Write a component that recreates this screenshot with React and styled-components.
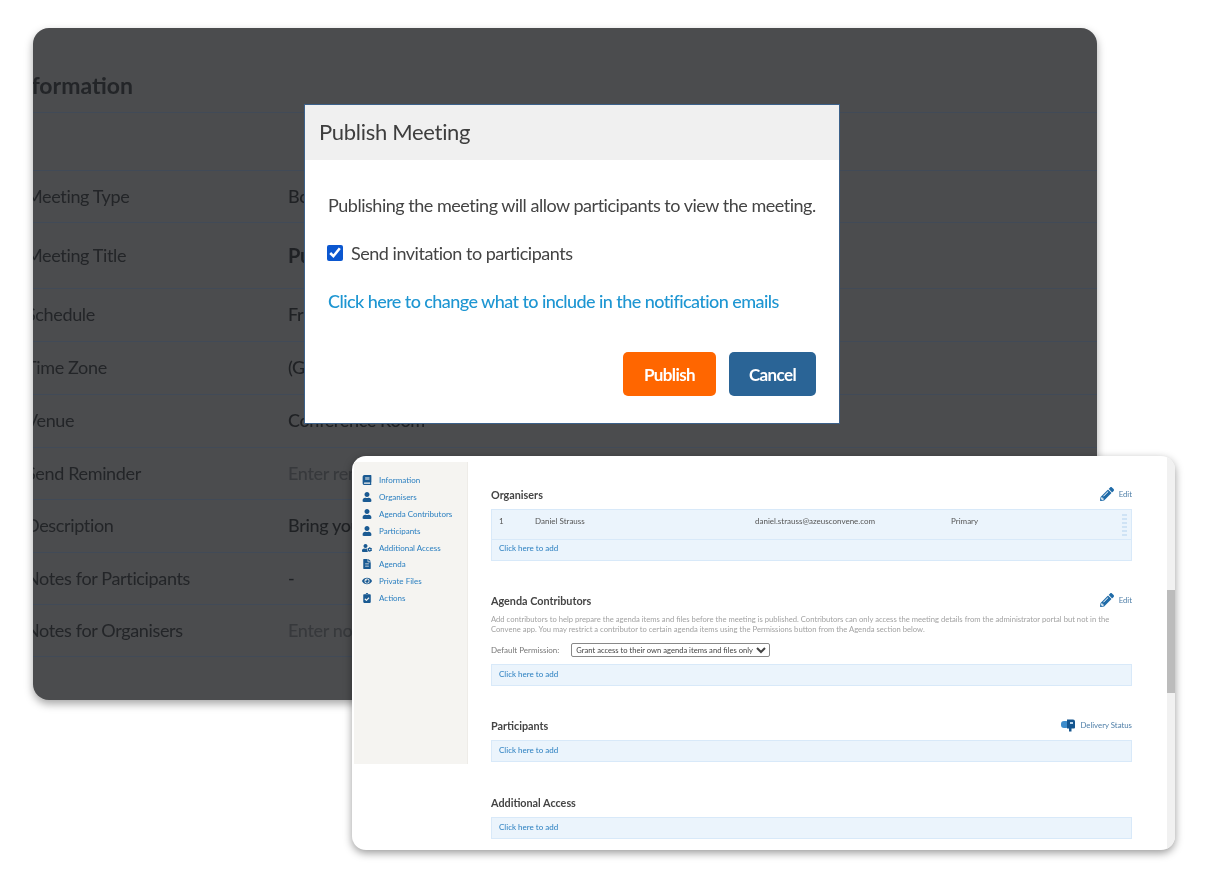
import styled, { createGlobalStyle } from "styled-components";
import {
  FaBook,
  FaUser,
  FaUserCog,
  FaFileAlt,
  FaEye,
  FaClipboardCheck,
  FaPencilAlt,
} from "react-icons/fa";

const GlobalStyle = createGlobalStyle`
  body {
    margin: 0;
    background: #fff;
    font-family: Lato, "Noto Sans", sans-serif;
  }
`;

const Stage = styled.div`
  position: relative;
  width: 1210px;
  height: 870px;
  overflow: hidden;
`;

/* dark page behind the modal */
const BackCard = styled.div`
  position: absolute;
  left: 33px;
  top: 28px;
  width: 1064px;
  height: 672px;
  display: flex;
  flex-direction: column;
  background: #4b4c4e;
  border-radius: 16px;
  box-shadow: 0 4px 8px rgba(0, 0, 0, 0.35);
  overflow: hidden;
  filter: blur(0.5px);
`;

const BackTitle = styled.h2`
  margin: 0 0 0 -21px;
  height: 84px;
  padding-top: 44px;
  box-sizing: border-box;
  font-size: 23px;
  line-height: 27px;
  font-weight: 700;
  color: #232528;
`;

const BackRow = styled.div`
  display: grid;
  grid-template-columns: 262px 1fr;
  align-items: center;
  margin-left: -7px;
  height: ${(p) => p.$h}px;
  padding-bottom: 2px;
  box-sizing: border-box;
  border-top: 1px solid #414a57;
  font-size: 18px;
  letter-spacing: -0.35px;
  color: #232528;
  &:last-child {
    border-bottom: 1px solid #414a57;
  }
`;

const BackValue = styled.span`
  color: ${(p) => (p.$muted ? "#37393c" : "#1f2124")};
  font-weight: ${(p) => (p.$bold ? 700 : 500)};
  font-size: ${(p) => (p.$big ? 20 : 18)}px;
  white-space: nowrap;
`;

/* modal */
const Modal = styled.div`
  position: absolute;
  left: 304px;
  top: 104px;
  width: 536px;
  height: 320px;
  box-sizing: border-box;
  display: flex;
  flex-direction: column;
  background: #fff;
  border: 1px solid #3c618a;
  filter: blur(0.4px);
`;

const ModalHeader = styled.div`
  height: 55px;
  padding: 13px 14px 0;
  box-sizing: border-box;
  background: #f0f0f0;
  font-size: 22px;
  line-height: 28px;
  letter-spacing: -0.3px;
  color: #3e3e3e;
`;

const ModalBody = styled.div`
  display: flex;
  flex-direction: column;
  padding: 33px 23px 0;
  font-size: 18px;
  letter-spacing: -0.48px;
  color: #444;
`;

const ModalText = styled.p`
  margin: 0;
  line-height: 24px;
  white-space: nowrap;
`;

const CheckLine = styled.label`
  display: flex;
  align-items: center;
  gap: 8px;
  margin-top: 24px;
  line-height: 24px;
`;

const Check = styled.input`
  width: 16px;
  height: 16px;
  margin: 0 0 0 -1px;
  accent-color: #0b57d0;
`;

const ModalLink = styled.a`
  margin-top: 24px;
  line-height: 24px;
  font-weight: 500;
  letter-spacing: -0.57px;
  white-space: nowrap;
  color: #1e96d2;
`;

const ModalFooter = styled.div`
  display: flex;
  justify-content: flex-end;
  gap: 13px;
  margin-top: 39px;
`;

const Button = styled.button`
  width: ${(p) => p.$w}px;
  height: 44px;
  border: 0;
  border-radius: 5px;
  background: ${(p) => p.$bg};
  color: #fff;
  font-family: inherit;
  font-size: 17px;
  font-weight: 700;
  letter-spacing: -0.6px;
`;

/* front window */
const Win = styled.div`
  position: absolute;
  left: 352px;
  top: 456px;
  width: 823px;
  height: 394px;
  display: flex;
  background: #fff;
  border-radius: 14px;
  box-shadow: 0 3px 8px rgba(0, 0, 0, 0.4);
  overflow: hidden;
  filter: blur(0.5px);
`;

const Sidebar = styled.nav`
  flex: none;
  align-self: flex-start;
  width: 114px;
  height: 302px;
  margin: 6px 0 0 2px;
  padding-top: 10px;
  box-sizing: border-box;
  background: #f5f4f1;
  border-right: 1px solid #eeece8;
`;

const NavItem = styled.div`
  display: flex;
  align-items: center;
  height: 16.8px;
  padding-left: 8px;
  font-size: 8px;
  color: #2a7fc0;
  svg {
    flex: none;
    width: 10px;
    height: 10px;
    margin-right: 7px;
    color: #1a5a92;
  }
`;

const Main = styled.main`
  flex: 1;
  padding: 0 35px 0 23px;
`;

const SectionHead = styled.div`
  display: flex;
  justify-content: space-between;
  align-items: center;
  height: 16px;
  margin-top: ${(p) => p.$top}px;
`;

const Heading = styled.h3`
  margin: 0;
  font-size: 10.8px;
  font-weight: 700;
  color: #444;
`;

const HeadAction = styled.span`
  display: flex;
  align-items: center;
  gap: 5px;
  font-size: 7.8px;
  color: #4f7fa8;
  svg {
    width: 14px;
    height: 14px;
    color: #1f6ba8;
  }
`;

const Box = styled.div`
  margin-top: ${(p) => p.$top || 0}px;
  background: #ebf4fc;
  border: 1px solid #d8e9f9;
`;

const PersonRow = styled.div`
  position: relative;
  display: grid;
  grid-template-columns: 36px 220px 196px 1fr;
  height: 30px;
  padding: 7px 0 0 7px;
  box-sizing: border-box;
  border-bottom: 1px solid #d8e9f9;
  font-size: 8px;
  line-height: 9px;
  color: #555;
`;

const DragHandle = styled.span`
  position: absolute;
  right: 4px;
  top: 4px;
  width: 5px;
  height: 22px;
  background: repeating-linear-gradient(#cfe3f5 0 2px, transparent 2px 4px);
`;

const AddLink = styled.div`
  height: 20px;
  padding-left: 7px;
  font-size: 8px;
  line-height: ${(p) => (p.$raised ? 16 : 18)}px;
  color: #2a7fc0;
`;

const HelpText = styled.p`
  margin: 6px 0 0;
  width: 622px;
  font-size: 7.65px;
  line-height: 10px;
  color: #a2a2a2;
`;

const PermissionLine = styled.div`
  display: flex;
  align-items: center;
  gap: 12px;
  margin-top: 9px;
  font-size: 8px;
  color: #777;
`;

const PermissionSelect = styled.select`
  width: 199px;
  height: 14px;
  padding: 0;
  border: 1px solid #888;
  border-radius: 2px;
  background: #fff;
  font-family: inherit;
  font-size: 7.6px;
  color: #444;
`;

const Scrollbar = styled.div`
  flex: none;
  width: 8px;
  padding-top: 134px;
  box-sizing: border-box;
  background: #f1f1f1;
`;

const ScrollThumb = styled.div`
  height: 103px;
  background: #bcbcbc;
`;

const MailboxIcon = () => (
  <svg viewBox="0 0 14 14">
    <rect x="0" y="3" width="8" height="7" rx="3" fill="#3d8ccb" />
    <path d="M6 1.5 h6 a2 2 0 0 1 2 2 v6 a1 1 0 0 1 -1 1 h-2.5 v3 h-2.5 v-3 h-2 z" fill="#15568f" />
    <rect x="9" y="4" width="3" height="2" fill="#bcd8ef" />
  </svg>
);

const backRows = [
  { h: 58, label: "" },
  { h: 52, label: "Meeting Type", value: "Board Meeting" },
  { h: 66, label: "Meeting Title", value: "Publish Meeting", bold: true, big: true },
  { h: 53, label: "Schedule", value: "Friday, 10 March" },
  { h: 53, label: "Time Zone", value: "(GMT+08:00) Singapore" },
  { h: 53, label: "Venue", value: "Conference Room" },
  { h: 52, label: "Send Reminder", value: "Enter reminder", muted: true },
  { h: 53, label: "Description", value: "Bring your laptop" },
  { h: 52, label: "Notes for Participants", value: "-" },
  { h: 53, label: "Notes for Organisers", value: "Enter notes", muted: true },
];

const navItems = [
  { icon: FaBook, label: "Information" },
  { icon: FaUser, label: "Organisers" },
  { icon: FaUser, label: "Agenda Contributors" },
  { icon: FaUser, label: "Participants" },
  { icon: FaUserCog, label: "Additional Access" },
  { icon: FaFileAlt, label: "Agenda" },
  { icon: FaEye, label: "Private Files" },
  { icon: FaClipboardCheck, label: "Actions" },
];

const App = () => {
  return (
    <Stage>
      <GlobalStyle />
      <BackCard>
        <BackTitle>Information</BackTitle>
        {backRows.map((row) => (
          <BackRow key={row.label} $h={row.h}>
            <span>{row.label}</span>
            <BackValue $muted={row.muted} $bold={row.bold} $big={row.big}>
              {row.value}
            </BackValue>
          </BackRow>
        ))}
      </BackCard>

      <Modal>
        <ModalHeader>Publish Meeting</ModalHeader>
        <ModalBody>
          <ModalText>Publishing the meeting will allow participants to view the meeting.</ModalText>
          <CheckLine>
            <Check type="checkbox" defaultChecked />
            Send invitation to participants
          </CheckLine>
          <ModalLink>Click here to change what to include in the notification emails</ModalLink>
          <ModalFooter>
            <Button $w={93} $bg="#ff6600">Publish</Button>
            <Button $w={87} $bg="#2a6496">Cancel</Button>
          </ModalFooter>
        </ModalBody>
      </Modal>

      <Win>
        <Sidebar>
          {navItems.map(({ icon: Icon, label }) => (
            <NavItem key={label}>
              <Icon />
              {label}
            </NavItem>
          ))}
        </Sidebar>
        <Main>
          <SectionHead $top={30}>
            <Heading>Organisers</Heading>
            <HeadAction>
              <FaPencilAlt />
              Edit
            </HeadAction>
          </SectionHead>
          <Box $top={7}>
            <PersonRow>
              <span>1</span>
              <span>Daniel Strauss</span>
              <span>daniel.strauss@azeusconvene.com</span>
              <span>Primary</span>
              <DragHandle />
            </PersonRow>
            <AddLink $raised>Click here to add</AddLink>
          </Box>

          <SectionHead $top={31}>
            <Heading>Agenda Contributors</Heading>
            <HeadAction>
              <FaPencilAlt />
              Edit
            </HeadAction>
          </SectionHead>
          <HelpText>
            Add contributors to help prepare the agenda items and files before the meeting is published. Contributors can only access the meeting details from the administrator portal but not in the Convene app. You may restrict a contributor to certain agenda items using the Permissions button from the Agenda section below.
          </HelpText>
          <PermissionLine>
            Default Permission:
            <PermissionSelect>
              <option>Grant access to their own agenda items and files only</option>
            </PermissionSelect>
          </PermissionLine>
          <Box $top={7}>
            <AddLink>Click here to add</AddLink>
          </Box>

          <SectionHead $top={31}>
            <Heading>Participants</Heading>
            <HeadAction>
              <MailboxIcon />
              Delivery Status
            </HeadAction>
          </SectionHead>
          <Box $top={7}>
            <AddLink>Click here to add</AddLink>
          </Box>

          <SectionHead $top={32}>
            <Heading>Additional Access</Heading>
          </SectionHead>
          <Box $top={7}>
            <AddLink>Click here to add</AddLink>
          </Box>
        </Main>
        <Scrollbar>
          <ScrollThumb />
        </Scrollbar>
      </Win>
    </Stage>
  );
};

export default App;
